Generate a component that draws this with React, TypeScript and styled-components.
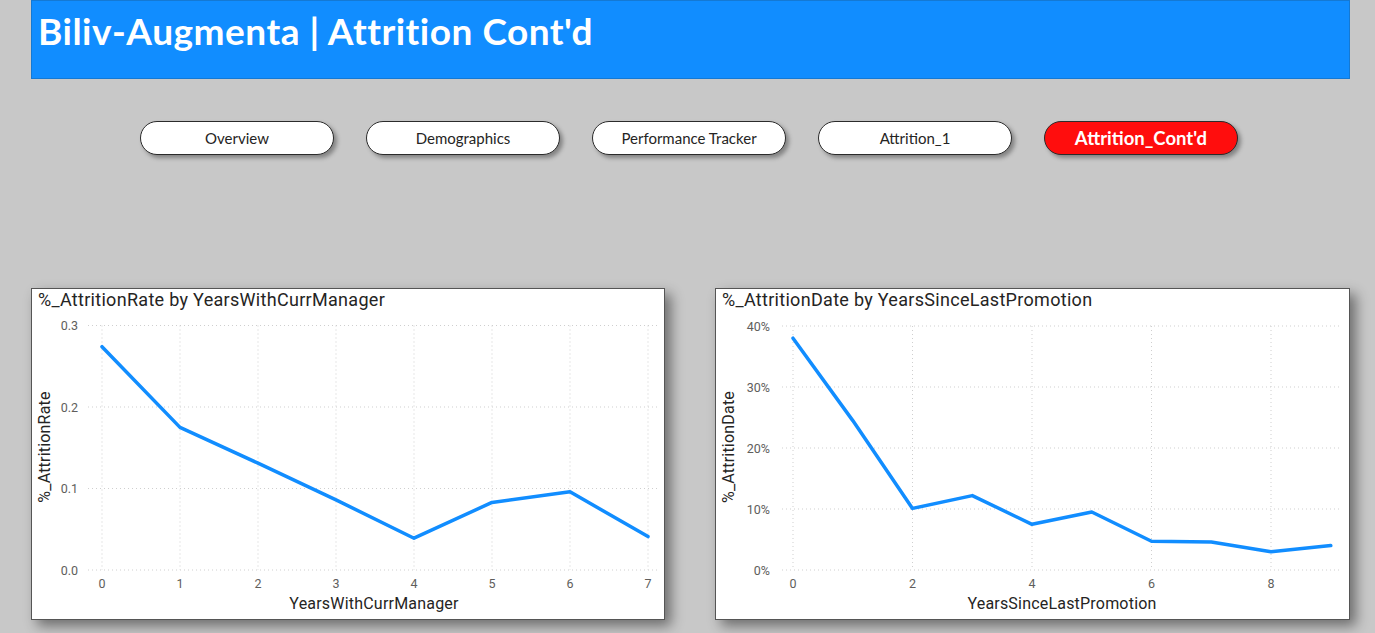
import React from "react";
import styled, { createGlobalStyle } from "styled-components";

const GlobalStyle = createGlobalStyle`
  html, body { margin: 0; padding: 0; background: #c8c8c8; }
  * { box-sizing: border-box; }
`;

const Page = styled.div`
  width: 1375px;
  height: 633px;
  overflow: hidden;
  padding: 0 25px 0 31px;
  display: flex;
  flex-direction: column;
  font-family: Lato, "Open Sans", sans-serif;
`;

const Header = styled.header`
  height: 79px;
  background: #118dff;
  border: 1px solid #1479d4;
  padding: 8px 0 0 6px;
`;

const Title = styled.h1`
  margin: 0;
  font-family: Lato, "Open Sans", sans-serif;
  font-weight: 700;
  font-size: 37px;
  letter-spacing: 0.5px;
  line-height: 43px;
  color: #ffffff;
`;

const Nav = styled.nav`
  margin-top: 42px;
  padding-right: 3px;
  display: flex;
  justify-content: center;
  gap: 32px;
`;

const NavButton = styled.button<{ $active?: boolean }>`
  width: 194px;
  height: 34px;
  border-radius: 17px;
  border: 1px solid #2b2b2b;
  background: ${(p) => (p.$active ? "#ff0d0d" : "#ffffff")};
  color: ${(p) => (p.$active ? "#ffffff" : "#252423")};
  font-family: Lato, "Open Sans", sans-serif;
  font-weight: ${(p) => (p.$active ? 700 : 400)};
  font-size: ${(p) => (p.$active ? "18.5px" : "15px")};
  box-shadow: 3px 3px 4px rgba(0, 0, 0, 0.35);
  padding: 0;
  cursor: pointer;
`;

const ChartsRow = styled.div`
  margin-top: 133px;
  display: grid;
  grid-template-columns: 634px 635px;
  column-gap: 50px;
`;

const Card = styled.section`
  height: 332px;
  background: #ffffff;
  border: 1px solid #555555;
  box-shadow: 6px 6px 12px rgba(0, 0, 0, 0.45);
  display: flex;
  flex-direction: column;
`;

const CardTitle = styled.div`
  height: 26px;
  padding: 0 0 0 6px;
  font-family: Roboto, "DejaVu Sans", sans-serif;
  font-size: 18px;
  letter-spacing: 0.3px;
  line-height: 22px;
  color: #252423;
  white-space: nowrap;
`;

const Plot = styled.svg`
  display: block;
  flex: 1;
  width: 100%;
  font-family: Roboto, "DejaVu Sans", sans-serif;
`;

type ChartProps = {
  title: string;
  ox: number;
  oy: number;
  width: number;
  height: number;
  yTicks: { label: string; y: number }[];
  yLabelX: number;
  gridX0: number;
  gridX1: number;
  xTicks: { label: string; x: number }[];
  points: [number, number][];
  xTitle: string;
  xTitleX: number;
  yTitle: string;
  yTitleX: number;
  yTitleY: number;
};

const LineChart: React.FC<ChartProps> = (p) => {
  const lx = (x: number) => x - p.ox;
  const ly = (y: number) => y - p.oy;
  const top = p.yTicks[0].y;
  const bottom = p.yTicks[p.yTicks.length - 1].y;
  const d = p.points
    .map(([x, y], i) => `${i === 0 ? "M" : "L"}${lx(x).toFixed(1)},${ly(y).toFixed(1)}`)
    .join(" ");
  return (
    <Card>
      <CardTitle>{p.title}</CardTitle>
      <Plot viewBox={`0 0 ${p.width} ${p.height}`} width={p.width} height={p.height}>
        {p.yTicks.map((t) => (
          <g key={t.label}>
            <line
              x1={lx(p.gridX0)}
              x2={lx(p.gridX1)}
              y1={ly(t.y)}
              y2={ly(t.y)}
              stroke="#cfcfcf"
              strokeWidth={1}
              strokeDasharray="1 3"
            />
            <text
              x={lx(p.yLabelX)}
              y={ly(t.y) + 4.5}
              textAnchor="end"
              fontSize={12.5}
              fill="#605e5c"
            >
              {t.label}
            </text>
          </g>
        ))}
        {p.xTicks.map((t) => (
          <g key={t.label}>
            <line
              x1={lx(t.x)}
              x2={lx(t.x)}
              y1={ly(top)}
              y2={ly(bottom)}
              stroke="#cfcfcf"
              strokeWidth={1}
              strokeDasharray="1 3"
            />
            <text x={lx(t.x)} y={ly(588)} textAnchor="middle" fontSize={12.5} fill="#605e5c">
              {t.label}
            </text>
          </g>
        ))}
        <path d={d} fill="none" stroke="#118dff" strokeWidth={3.5} strokeLinejoin="round" strokeLinecap="round" />
        <text x={lx(p.xTitleX)} y={ly(609)} textAnchor="middle" fontSize={16} letterSpacing={0.2} fill="#252423">
          {p.xTitle}
        </text>
        <text
          x={lx(p.yTitleX)}
          y={ly(p.yTitleY)}
          textAnchor="middle"
          fontSize={16}
          letterSpacing={0.2}
          fill="#252423"
          transform={`rotate(-90 ${lx(p.yTitleX)} ${ly(p.yTitleY)})`}
          dominantBaseline="middle"
        >
          {p.yTitle}
        </text>
      </Plot>
    </Card>
  );
};

const leftVals = [0.274, 0.175, 0.131, 0.086, 0.039, 0.083, 0.096, 0.041];
const rightVals = [0.38, 0.245, 0.101, 0.122, 0.075, 0.095, 0.047, 0.046, 0.03, 0.04];

const leftY = (v: number) => 570 - v * 815;
const rightY = (v: number) => 570 - v * 610;

const navItems = ["Overview", "Demographics", "Performance Tracker", "Attrition_1", "Attrition_Cont'd"];

export default function App() {
  return (
    <>
      <GlobalStyle />
      <Page>
        <Header>
          <Title>Biliv-Augmenta | Attrition Cont'd</Title>
        </Header>
        <Nav>
          {navItems.map((n) => (
            <NavButton key={n} $active={n === "Attrition_Cont'd"}>
              {n}
            </NavButton>
          ))}
        </Nav>
        <ChartsRow>
          <LineChart
            title="%_AttritionRate by YearsWithCurrManager"
            ox={32}
            oy={315}
            width={632}
            height={304}
            yTicks={[
              { label: "0.3", y: leftY(0.3) },
              { label: "0.2", y: leftY(0.2) },
              { label: "0.1", y: leftY(0.1) },
              { label: "0.0", y: leftY(0) },
            ]}
            yLabelX={78}
            gridX0={88}
            gridX1={660}
            xTicks={[0, 1, 2, 3, 4, 5, 6, 7].map((i) => ({ label: String(i), x: 102 + 78 * i }))}
            points={leftVals.map((v, i) => [102 + 78 * i, leftY(v)] as [number, number])}
            xTitle="YearsWithCurrManager"
            xTitleX={374}
            yTitle="%_AttritionRate"
            yTitleX={46}
            yTitleY={447}
          />
          <LineChart
            title="%_AttritionDate by YearsSinceLastPromotion"
            ox={716}
            oy={315}
            width={633}
            height={304}
            yTicks={[
              { label: "40%", y: rightY(0.4) },
              { label: "30%", y: rightY(0.3) },
              { label: "20%", y: rightY(0.2) },
              { label: "10%", y: rightY(0.1) },
              { label: "0%", y: rightY(0) },
            ]}
            yLabelX={770}
            gridX0={782}
            gridX1={1342}
            xTicks={[0, 2, 4, 6, 8].map((i) => ({ label: String(i), x: 793 + 59.75 * i }))}
            points={rightVals.map((v, i) => [793 + 59.75 * i, rightY(v)] as [number, number])}
            xTitle="YearsSinceLastPromotion"
            xTitleX={1062}
            yTitle="%_AttritionDate"
            yTitleX={730}
            yTitleY={447}
          />
        </ChartsRow>
      </Page>
    </>
  );
}
